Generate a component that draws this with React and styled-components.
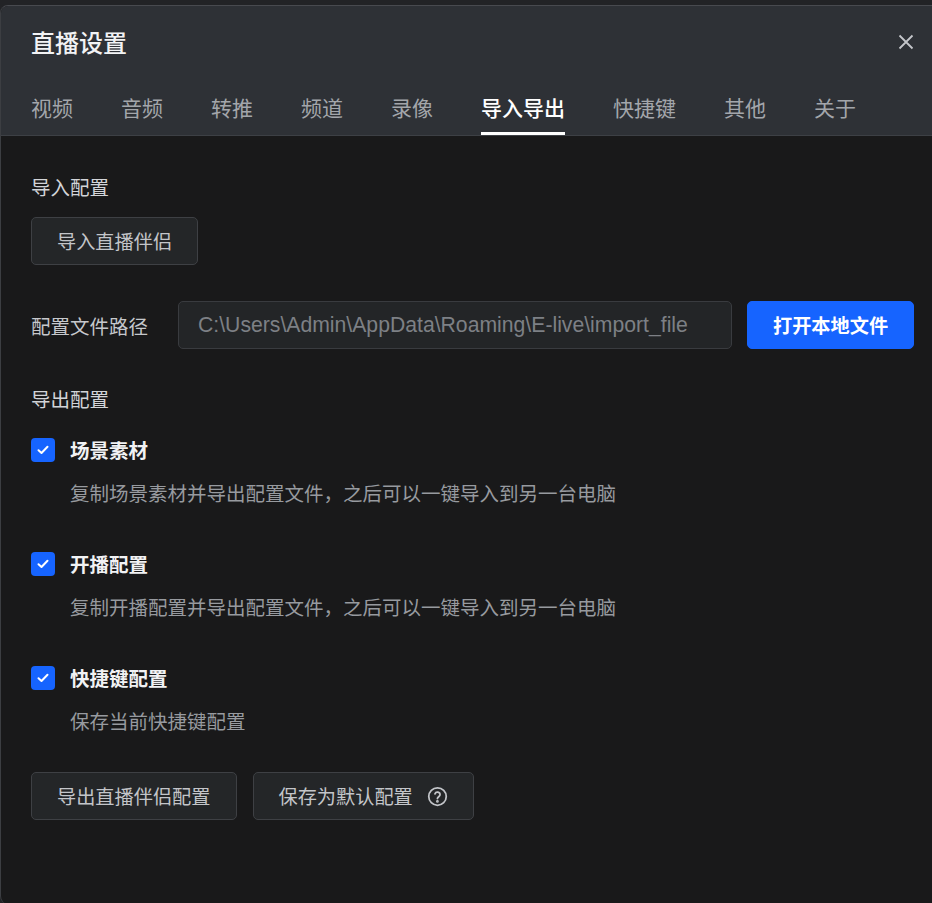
import React, { useState } from "react";
import styled, { createGlobalStyle } from "styled-components";

const GlobalStyle = createGlobalStyle`
  html, body {
    margin: 0;
    padding: 0;
    background: #222326;
  }
  body {
    font-family: "Noto Sans CJK SC", "Noto Sans", sans-serif;
  }
`;

const Screen = styled.div`
  height: 903px;
  padding-top: 5px;
  box-sizing: border-box;
  overflow: hidden;
`;

const Dialog = styled.div`
  height: 100%;
  display: flex;
  flex-direction: column;
  background: #19191a;
  border-top: 1px solid #484a4f;
  border-left: 1px solid #3c3e42;
  border-radius: 8px 0 0 8px;
  overflow: hidden;
`;

const Header = styled.div`
  background: #2e3136;
  border-bottom: 1px solid #3d4045;
  padding: 20px 0 0 30px;
`;

const TitleRow = styled.div`
  display: flex;
  align-items: center;
  justify-content: space-between;
  height: 32px;
`;

const Title = styled.h1`
  margin: 0;
  font-size: 24px;
  font-weight: 500;
  line-height: 32px;
  color: #f2f3f5;
`;

const CloseButton = styled.button`
  width: 32px;
  height: 32px;
  margin-right: 10px;
  padding: 0;
  border: none;
  background: none;
  color: #c4c6ca;
  display: flex;
  align-items: center;
  justify-content: center;
  cursor: pointer;
`;

const Tabs = styled.div`
  display: flex;
  gap: 48px;
  margin-top: 34px;
`;

const Tab = styled.div`
  font-size: 21px;
  line-height: 30px;
  padding-bottom: 10px;
  color: ${({ $active }) => ($active ? "#ffffff" : "#a3a6ab")};
  font-weight: ${({ $active }) => ($active ? 500 : 400)};
  border-bottom: 3px solid ${({ $active }) => ($active ? "#ffffff" : "transparent")};
  cursor: pointer;
`;

const Body = styled.div`
  padding: 38px 0 0 30px;
  display: flex;
  flex-direction: column;
  font-size: 19.5px;
`;

const SectionTitle = styled.div`
  line-height: 26px;
  color: #d2d4d8;
  margin-top: ${({ $top }) => $top || 0}px;
`;

const Button = styled.button`
  height: 48px;
  padding: 0 25px;
  box-sizing: border-box;
  border-radius: 5px;
  border: 1px solid ${({ $primary }) => ($primary ? "#1664ff" : "#3e4044")};
  background: ${({ $primary }) => ($primary ? "#1664ff" : "#242628")};
  color: ${({ $primary }) => ($primary ? "#ffffff" : "#c3c5c9")};
  font-family: inherit;
  font-size: 19.2px;
  font-weight: ${({ $primary }) => ($primary ? 600 : 400)};
  display: inline-flex;
  align-items: center;
  gap: 14px;
  cursor: pointer;
  white-space: nowrap;
`;

const ButtonRow = styled.div`
  display: flex;
  gap: 16px;
  margin-top: ${({ $top }) => $top || 0}px;
`;

const PathRow = styled.div`
  display: flex;
  align-items: center;
  margin-top: 36px;
`;

const PathLabel = styled.div`
  color: #c6c8cc;
  width: 147px;
`;

const PathInput = styled.div`
  width: 554px;
  height: 48px;
  box-sizing: border-box;
  border: 1px solid #393b3f;
  border-radius: 5px;
  background: #232527;
  padding-left: 19px;
  display: flex;
  align-items: center;
  font-family: "Liberation Sans", Arial, sans-serif;
  font-size: 21.2px;
  color: #7d8085;
  margin-right: 15px;
  white-space: nowrap;
  overflow: hidden;
`;

const OptionList = styled.div`
  display: flex;
  flex-direction: column;
  gap: 45px;
  margin-top: 25px;
`;

const Option = styled.div`
  display: flex;
  flex-direction: column;
  gap: 17px;
`;

const OptionHead = styled.label`
  display: flex;
  align-items: center;
  gap: 15px;
  cursor: pointer;
`;

const Box = styled.span`
  width: 24px;
  height: 24px;
  border-radius: 4px;
  background: ${({ $checked }) => ($checked ? "#1664ff" : "transparent")};
  border: ${({ $checked }) => ($checked ? "none" : "1px solid #5a5d62")};
  box-sizing: border-box;
  display: flex;
  align-items: center;
  justify-content: center;
`;

const OptionLabel = styled.span`
  line-height: 26px;
  font-weight: 700;
  color: #f1f2f4;
`;

const OptionDesc = styled.div`
  padding-left: 39px;
  line-height: 26px;
  color: #979a9f;
`;

const tabs = ["视频", "音频", "转推", "频道", "录像", "导入导出", "快捷键", "其他", "关于"];

const initialOptions = [
  { id: "scene", label: "场景素材", desc: "复制场景素材并导出配置文件，之后可以一键导入到另一台电脑" },
  { id: "live", label: "开播配置", desc: "复制开播配置并导出配置文件，之后可以一键导入到另一台电脑" },
  { id: "hotkey", label: "快捷键配置", desc: "保存当前快捷键配置" },
];

const Check = () => (
  <svg width="12" height="10" viewBox="0 0 12 10" fill="none">
    <path d="M1.5 5.2L4.5 8L10.5 1.8" stroke="#fff" strokeWidth="2" strokeLinecap="round" strokeLinejoin="round" />
  </svg>
);

const HelpIcon = () => (
  <svg width="21" height="21" viewBox="0 0 24 24" fill="none" stroke="#c3c5c9" strokeWidth="2" strokeLinecap="round">
    <circle cx="12" cy="12" r="10" />
    <path d="M9.1 9a3 3 0 0 1 5.8 1c0 2-3 2.6-3 4.4" />
    <circle cx="11.9" cy="17.6" r="0.6" fill="#c3c5c9" />
  </svg>
);

export default function App() {
  const [active, setActive] = useState("导入导出");
  const [checked, setChecked] = useState({ scene: true, live: true, hotkey: true });

  return (
    <>
      <GlobalStyle />
      <Screen>
        <Dialog>
          <Header>
            <TitleRow>
              <Title>直播设置</Title>
              <CloseButton aria-label="关闭">
                <svg width="16" height="16" viewBox="0 0 16 16">
                  <path d="M1.5 1.5L14.5 14.5M14.5 1.5L1.5 14.5" stroke="#c4c6ca" strokeWidth="1.8" />
                </svg>
              </CloseButton>
            </TitleRow>
            <Tabs>
              {tabs.map((t) => (
                <Tab key={t} $active={t === active} onClick={() => setActive(t)}>
                  {t}
                </Tab>
              ))}
            </Tabs>
          </Header>
          <Body>
            <SectionTitle>导入配置</SectionTitle>
            <ButtonRow $top={17}>
              <Button>导入直播伴侣</Button>
            </ButtonRow>
            <PathRow>
              <PathLabel>配置文件路径</PathLabel>
              <PathInput>C:\Users\Admin\AppData\Roaming\E-live\import_file</PathInput>
              <Button $primary>打开本地文件</Button>
            </PathRow>
            <SectionTitle $top={37}>导出配置</SectionTitle>
            <OptionList>
              {initialOptions.map((o) => (
                <Option key={o.id}>
                  <OptionHead onClick={() => setChecked({ ...checked, [o.id]: !checked[o.id] })}>
                    <Box $checked={checked[o.id]}>{checked[o.id] && <Check />}</Box>
                    <OptionLabel>{o.label}</OptionLabel>
                  </OptionHead>
                  <OptionDesc>{o.desc}</OptionDesc>
                </Option>
              ))}
            </OptionList>
            <ButtonRow $top={38}>
              <Button>导出直播伴侣配置</Button>
              <Button>
                保存为默认配置
                <HelpIcon />
              </Button>
            </ButtonRow>
          </Body>
        </Dialog>
      </Screen>
    </>
  );
}
